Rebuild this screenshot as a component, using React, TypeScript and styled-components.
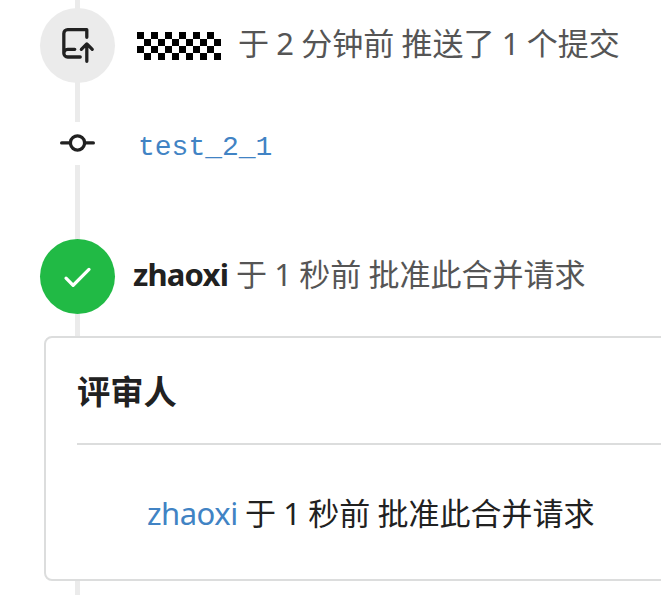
import React from "react";
import styled, { createGlobalStyle } from "styled-components";

const GlobalStyle = createGlobalStyle`
  * { box-sizing: border-box; }
  body {
    margin: 0;
    background: #fff;
    color: #212121;
    font: 31px/40px "Noto Sans", "Noto Sans CJK SC", sans-serif;
    overflow: hidden;
  }
`;

const Timeline = styled.main`
  width: 661px;
  height: 595px;
  overflow: hidden;
  display: flex;
  flex-direction: column;
  white-space: nowrap;
  background: linear-gradient(#ebebeb, #ebebeb) 75px 0 / 5px 100% no-repeat;
`;

const Event = styled.section<{ $height: number; $gap: number }>`
  display: flex;
  align-items: center;
  flex: none;
  height: ${(p) => p.$height}px;
  margin-top: ${(p) => p.$gap}px;
  padding-left: 40px;
`;

const Badge = styled.div<{ $background: string; $color: string; $height: number }>`
  display: flex;
  align-items: center;
  justify-content: center;
  flex: none;
  width: 75px;
  height: ${(p) => p.$height}px;
  border-radius: ${(p) => (p.$height === 75 ? "50%" : "0")};
  background: ${(p) => p.$background};
  color: ${(p) => p.$color};
`;

const Icon = styled.svg`
  display: block;
  width: 35px;
  height: 35px;
  fill: currentColor;
`;

const HiddenName = styled.span`
  width: 84px;
  height: 28px;
  margin: 0 17px 0 22px;
  background: conic-gradient(#fff 25%, #000 0 50%, #fff 0 75%, #000 0) 0 0 / 14px 14px;
`;

const Message = styled.span<{ $color?: string }>`
  color: ${(p) => p.$color ?? "#555"};
  word-spacing: -0.8px;

  ${Event} > & {
    margin-bottom: 6px;
  }
`;

const Author = styled.strong`
  width: 103px;
  margin: 0 0 6px 18px;
  letter-spacing: -0.8px;
`;

const CommitLink = styled.a`
  margin: 8px 0 0 23px;
  color: #4183c4;
  font: 28px/36px "Liberation Mono", monospace;
`;

const Card = styled.section`
  flex: none;
  width: 660px;
  height: 245px;
  margin: 22px 0 0 44px;
  padding: 32px 31px;
  border: 2px solid #dcdddd;
  border-radius: 8px;
  background: #fff;
`;

const Heading = styled.h2`
  height: 75px;
  margin: 0;
  border-bottom: 2px solid #dcdddd;
  font-size: 33.3px;
  line-height: 42px;
`;

const Review = styled.div`
  display: flex;
  margin: 48px 0 0 70px;
`;

const UserLink = styled.a`
  width: 98px;
  color: #4183c4;
  letter-spacing: -0.5px;
`;

const PushIcon = () => (
  <Icon viewBox="0 0 16 16">
    <path d="M1 2.5A2.5 2.5 0 0 1 3.5 0h8.75a.75.75 0 0 1 .75.75v3.5a.75.75 0 0 1-1.5 0V1.5h-8a1 1 0 0 0-1 1v6.708A2.493 2.493 0 0 1 3.5 9h3.25a.75.75 0 0 1 0 1.5H3.5a1 1 0 0 0 0 2h5.75a.75.75 0 0 1 0 1.5H3.5A2.5 2.5 0 0 1 1 11.5v-9Zm13.23 7.79h-.001l-1.224-1.224v6.184a.75.75 0 0 1-1.5 0V9.066L10.28 10.29a.75.75 0 0 1-1.06-1.061l2.505-2.504a.75.75 0 0 1 1.06 0L15.29 9.23a.751.751 0 0 1-.018 1.042.751.751 0 0 1-1.042.018Z" />
  </Icon>
);

const CommitIcon = () => (
  <Icon viewBox="0 0 16 16">
    <path d="M11.93 8.5a4.002 4.002 0 0 1-7.86 0H.75a.75.75 0 0 1 0-1.5h3.32a4.002 4.002 0 0 1 7.86 0h3.32a.75.75 0 0 1 0 1.5Zm-1.43-.75a2.5 2.5 0 1 0-5 0 2.5 2.5 0 0 0 5 0Z" />
  </Icon>
);

const CheckIcon = () => (
  <Icon viewBox="0 0 16 16">
    <path d="M13.78 4.22a.75.75 0 0 1 0 1.06l-7.25 7.25a.75.75 0 0 1-1.06 0L2.22 9.28a.751.751 0 0 1 .018-1.042.751.751 0 0 1 1.042-.018L6 10.94l6.72-6.72a.75.75 0 0 1 1.06 0Z" />
  </Icon>
);

export default function App() {
  return (
    <>
      <GlobalStyle />
      <Timeline>
        <Event $height={75} $gap={8}>
          <Badge $background="#ebebeb" $color="#212121" $height={75}>
            <PushIcon />
          </Badge>
          <HiddenName />
          <Message>于 2 分钟前 推送了 1 个提交</Message>
        </Event>
        <Event $height={43} $gap={39}>
          <Badge $background="#fff" $color="#212121" $height={43}>
            <CommitIcon />
          </Badge>
          <CommitLink>test_2_1</CommitLink>
        </Event>
        <Event $height={75} $gap={74}>
          <Badge $background="#21ba45" $color="#fff" $height={75}>
            <CheckIcon />
          </Badge>
          <Author>zhaoxi</Author>
          <Message>于 1 秒前 批准此合并请求</Message>
        </Event>
        <Card>
          <Heading>评审人</Heading>
          <Review>
            <UserLink>zhaoxi</UserLink>
            <Message $color="#212121">于 1 秒前 批准此合并请求</Message>
          </Review>
        </Card>
      </Timeline>
    </>
  );
}
